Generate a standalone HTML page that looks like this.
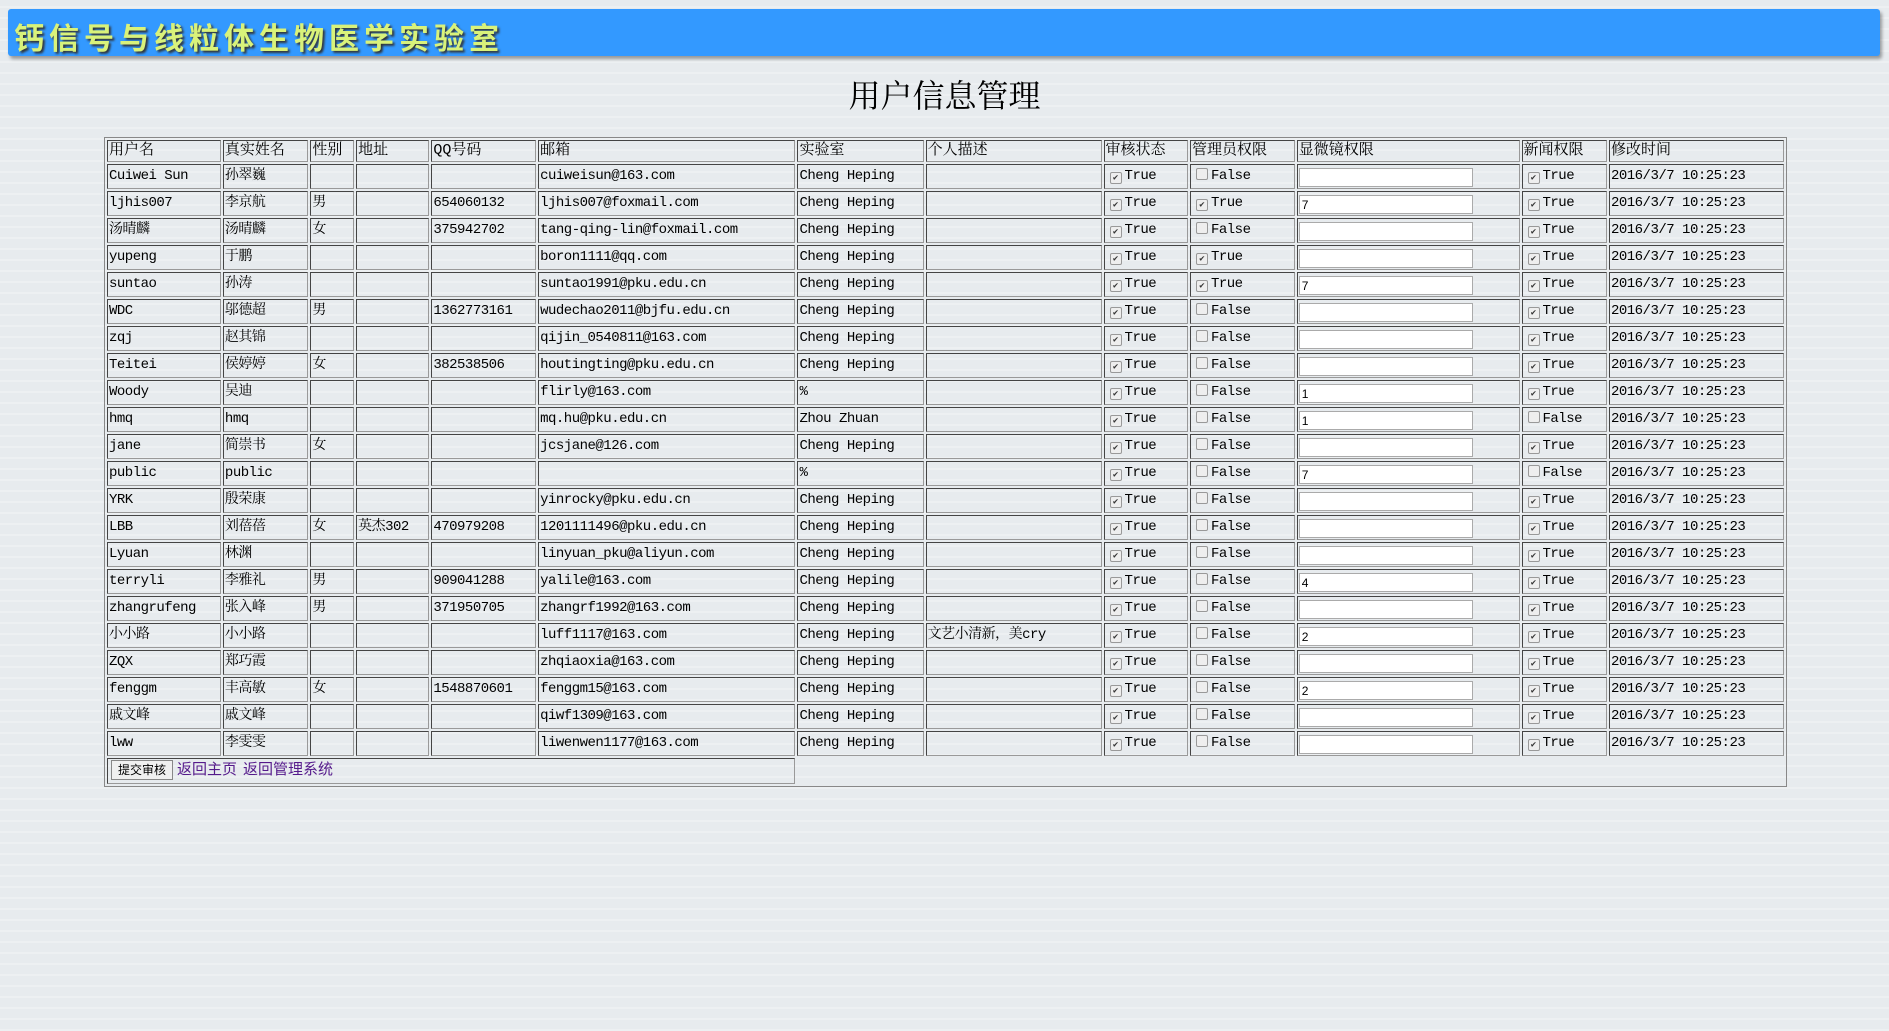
<!DOCTYPE html>
<html><head><meta charset="utf-8">
<style>
html,body{margin:0;padding:0;}
body{width:1889px;height:1031px;overflow:hidden;background:#e7ebee;font-family:"Liberation Mono","Noto Serif CJK SC",monospace;color:#000;position:relative;
background-image:repeating-linear-gradient(0deg,rgba(255,255,255,.25) 0 2px,transparent 2px 11px);}
.hdr{position:absolute;left:8px;top:9px;width:1872px;height:47px;background:#3399ff;border-radius:3px;box-shadow:2px 3px 3px rgba(0,0,0,.35);}
.hdr span{position:absolute;left:6px;top:5px;font-family:"WenQuanYi Zen Hei","Noto Sans CJK SC",sans-serif;font-weight:bold;font-size:30px;color:#d9f27a;letter-spacing:5px;text-shadow:2px 2px 2px #333;}
h1{position:absolute;left:0;width:1889px;top:74px;margin:0;text-align:center;font-family:"Noto Serif CJK SC",serif;font-size:32px;font-weight:normal;line-height:40px;}
table{position:absolute;left:104px;top:137px;border:1px solid #888;border-collapse:separate;border-spacing:2px;font-size:14px;table-layout:fixed;width:1683px;}
td{border:1px solid #444;border-right-color:#999;border-bottom-color:#999;padding:0 1px;height:23px;max-height:23px;white-space:nowrap;overflow:hidden;line-height:23px;letter-spacing:-0.5px;}
tr.h td{height:20px;line-height:20px;font-size:15px;letter-spacing:0;}
.cb{display:inline-block;width:10px;height:10px;border:1px solid #999;background:#eee;border-radius:2px;font-size:9px;line-height:10px;text-align:center;vertical-align:-1px;margin:0 3px 0 4px;color:#333;letter-spacing:0;}
input.t{display:block;width:174px;height:19px;border:1px solid #aaa;background:#fff;font-size:12px;padding:0 2px;box-sizing:border-box;font-family:"Liberation Sans",sans-serif;margin:2px 0 0 0;}
button{font-size:12px;font-family:"Noto Sans CJK SC",sans-serif;height:20px;line-height:16px;padding:0 6px;border:1px solid #888;background:#f0f0f0;margin:0 4px 0 2px;vertical-align:middle;}
a{color:#551a8b;font-size:15px;margin-right:6px;font-family:"Noto Sans CJK SC",sans-serif;letter-spacing:0;line-height:20px;}
</style></head><body>
<div class="hdr"><span>钙信号与线粒体生物医学实验室</span></div>
<h1>用户信息管理</h1>
<table>
<colgroup><col style="width:112px"><col style="width:84px"><col style="width:43px"><col style="width:72px"><col style="width:103px"><col style="width:253px"><col style="width:124px"><col style="width:173px"><col style="width:83px"><col style="width:103px"><col style="width:219px"><col style="width:84px"><col style="width:172px"></colgroup>
<tr class="h"><td>用户名</td><td>真实姓名</td><td>性别</td><td>地址</td><td>QQ号码</td><td>邮箱</td><td>实验室</td><td>个人描述</td><td>审核状态</td><td>管理员权限</td><td>显微镜权限</td><td>新闻权限</td><td>修改时间</td></tr>
<tbody id="b"></tbody>
<tr><td colspan="6"><button>提交审核</button><a>返回主页</a><a>返回管理系统</a></td></tr>
</table>
<script>
var d=[["Cuiwei Sun","孙翠巍","","","","cuiweisun@163.com","Cheng Heping","",0,"",1],
["ljhis007","李京航","男","","654060132","ljhis007@foxmail.com","Cheng Heping","",1,"7",1],
["汤晴麟","汤晴麟","女","","375942702","tang-qing-lin@foxmail.com","Cheng Heping","",0,"",1],
["yupeng","于鹏","","","","boron1111@qq.com","Cheng Heping","",1,"",1],
["suntao","孙涛","","","","suntao1991@pku.edu.cn","Cheng Heping","",1,"7",1],
["WDC","邬德超","男","","1362773161","wudechao2011@bjfu.edu.cn","Cheng Heping","",0,"",1],
["zqj","赵其锦","","","","qijin_0540811@163.com","Cheng Heping","",0,"",1],
["Teitei","侯婷婷","女","","382538506","houtingting@pku.edu.cn","Cheng Heping","",0,"",1],
["Woody","吴迪","","","","flirly@163.com","%","",0,"1",1],
["hmq","hmq","","","","mq.hu@pku.edu.cn","Zhou Zhuan","",0,"1",0],
["jane","简崇书","女","","","jcsjane@126.com","Cheng Heping","",0,"",1],
["public","public","","","","","%","",0,"7",0],
["YRK","殷荣康","","","","yinrocky@pku.edu.cn","Cheng Heping","",0,"",1],
["LBB","刘蓓蓓","女","英杰302","470979208","1201111496@pku.edu.cn","Cheng Heping","",0,"",1],
["Lyuan","林渊","","","","linyuan_pku@aliyun.com","Cheng Heping","",0,"",1],
["terryli","李雅礼","男","","909041288","yalile@163.com","Cheng Heping","",0,"4",1],
["zhangrufeng","张入峰","男","","371950705","zhangrf1992@163.com","Cheng Heping","",0,"",1],
["小小路","小小路","","","","luff1117@163.com","Cheng Heping","文艺小清新，美cry",0,"2",1],
["ZQX","郑巧霞","","","","zhqiaoxia@163.com","Cheng Heping","",0,"",1],
["fenggm","丰高敏","女","","1548870601","fenggm15@163.com","Cheng Heping","",0,"2",1],
["戚文峰","戚文峰","","","","qiwf1309@163.com","Cheng Heping","",0,"",1],
["lww","李雯雯","","","","liwenwen1177@163.com","Cheng Heping","",0,"",1]];
function cb(v){return '<span class="cb">'+(v?'✔':'')+'</span>'+(v?'True':'False');}
var h='';d.forEach(function(r){h+='<tr>';for(var i=0;i<8;i++)h+='<td>'+r[i]+'</td>';
h+='<td>'+cb(1)+'</td><td>'+cb(r[8])+'</td><td><input class="t" value="'+r[9]+'"></td><td>'+cb(r[10])+'</td><td>2016/3/7 10:25:23</td></tr>';});
document.getElementById('b').innerHTML=h;
</script>
</body></html>
